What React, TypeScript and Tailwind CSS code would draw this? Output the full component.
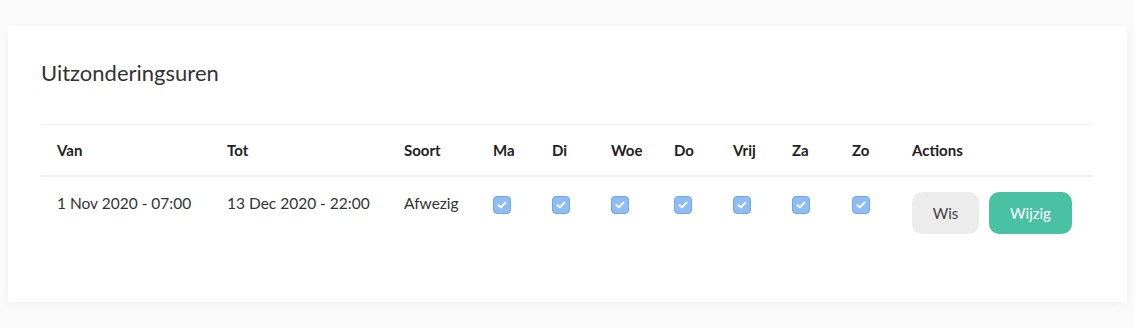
import React from 'react';

const DAYS = ['Ma', 'Di', 'Woe', 'Do', 'Vrij', 'Za', 'Zo'];

const COLS = 'grid grid-cols-[170px_177px_89px_59px_59px_63px_59px_59px_60px_60px_1fr]';

const CheckBox: React.FC = () => (
    <span className="flex h-[18px] w-[18px] items-center justify-center rounded-[4px] border border-[#6fa9e0] bg-[#8fbdf3]">
        <svg width="10" height="8" viewBox="0 0 10 8" aria-hidden="true">
            <path d="M1.5 4.2 L3.9 6.3 L8.5 1.7" fill="none" stroke="#fff" strokeWidth="1.9" strokeLinecap="round" strokeLinejoin="round" />
        </svg>
    </span>
);

export default function App() {
    return (
        <div className="min-h-[328px] w-full bg-[#fbfbfb] px-2 pt-[26px] font-['Lato','Open_Sans',sans-serif] text-[#333]">
            <div className="h-[276px] bg-white px-[33px] pt-[33px] shadow-[0_2px_10px_rgba(0,0,0,0.05)]">
                <h2 className="text-[22px] leading-[28px] text-[#333]">Uitzonderingsuren</h2>

                <div className="mt-[37px] w-[1051px] border-t border-[#f1f1f1]">
                    {/* Header */}
                    <div className={`${COLS} h-[52px] items-center border-b-2 border-[#efefef] text-[15px] font-bold text-[#222]`}>
                        <div className="pl-4">Van</div>
                        <div className="pl-4">Tot</div>
                        <div className="pl-4">Soort</div>
                        {DAYS.map((d) => (
                            <div key={d} className="pl-4">{d}</div>
                        ))}
                        <div className="pl-4">Actions</div>
                    </div>

                    {/* Row */}
                    <div className={`${COLS} items-start pt-[15px] text-[15.5px] text-[#333]`}>
                        <div className="pl-4 leading-[22px]">1 Nov 2020 - 07:00</div>
                        <div className="pl-4 leading-[22px]">13 Dec 2020 - 22:00</div>
                        <div className="pl-4 leading-[22px]">Afwezig</div>
                        {DAYS.map((d) => (
                            <div key={d} className="pl-4 pt-[4px]">
                                <CheckBox />
                            </div>
                        ))}
                        <div className="flex gap-[10px] pl-4">
                            <button className="h-[42px] w-[67px] rounded-[10px] bg-[#ececec] text-[15px] text-[#444]">Wis</button>
                            <button className="h-[42px] w-[83px] rounded-[10px] bg-[#48c2a2] text-[15px] text-white">Wijzig</button>
                        </div>
                    </div>
                </div>
            </div>
        </div>
    );
}
